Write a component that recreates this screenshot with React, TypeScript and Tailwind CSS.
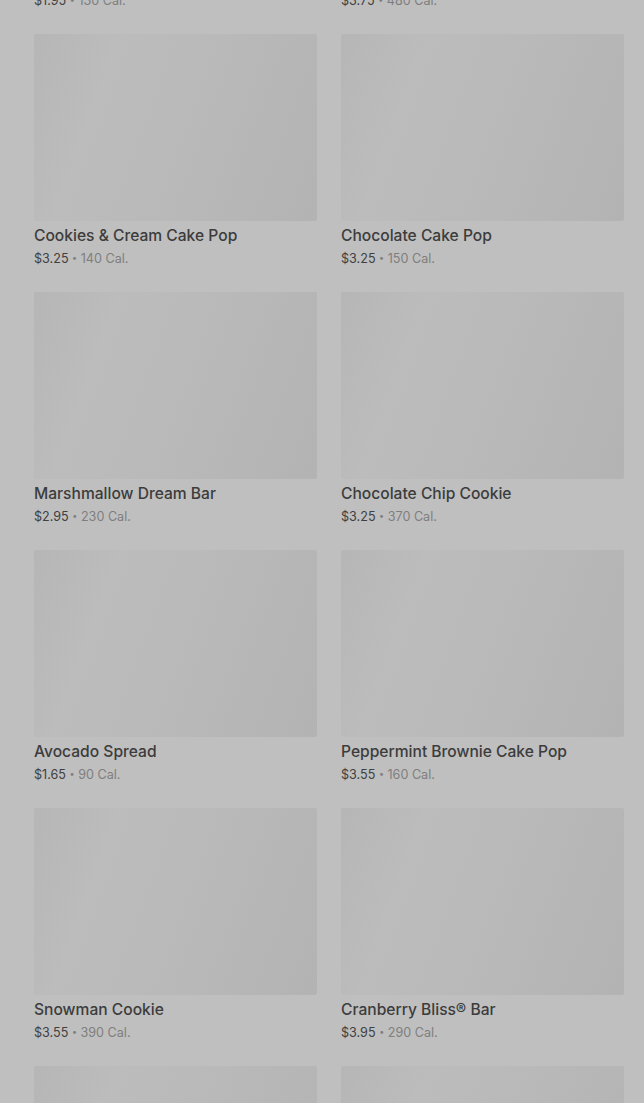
type Item = {
  name: string;
  price: string;
  cal: string;
};

const items: Item[] = [
  { name: "Cake Pop", price: "$1.95", cal: "130 Cal." },
  { name: "Bar", price: "$3.75", cal: "480 Cal." },
  { name: "Cookies & Cream Cake Pop", price: "$3.25", cal: "140 Cal." },
  { name: "Chocolate Cake Pop", price: "$3.25", cal: "150 Cal." },
  { name: "Marshmallow Dream Bar", price: "$2.95", cal: "230 Cal." },
  { name: "Chocolate Chip Cookie", price: "$3.25", cal: "370 Cal." },
  { name: "Avocado Spread", price: "$1.65", cal: "90 Cal." },
  { name: "Peppermint Brownie Cake Pop", price: "$3.55", cal: "160 Cal." },
  { name: "Snowman Cookie", price: "$3.55", cal: "390 Cal." },
  { name: "Cranberry Bliss® Bar", price: "$3.95", cal: "290 Cal." },
  { name: "Petite Vanilla Bean Scone", price: "$1.95", cal: "120 Cal." },
  { name: "Lemon Loaf", price: "$3.45", cal: "470 Cal." },
];

function ProductCard({ item }: { item: Item }) {
  return (
    <div className="flex flex-col">
      <div className="h-[187px] w-full rounded-[2px] bg-[linear-gradient(110deg,#b6b6b6_0%,#bcbcbc_25%,#b9b9b9_55%,#b3b3b3_100%)]" />
      <p className="mt-[5px] text-[15.6px] leading-[20px] font-medium text-[#3c3c3c]">{item.name}</p>
      <p className="mt-[4px] h-[17px] text-[12.6px] leading-[17px] text-[#404040]">
        {item.price}
        <span className="text-[#7e7e7e]">
          {" "}
          <span className="align-[2px] text-[9px] leading-none">•</span> {item.cal}
        </span>
      </p>
    </div>
  );
}

export default function App() {
  return (
    <main
      className="h-[1103px] overflow-hidden bg-[#bfbfbf] pl-[34px] pr-[20px]"
      style={{ fontFamily: "Inter, 'Noto Sans', sans-serif" }}
    >
      <div className="-mt-[224px] grid grid-cols-2 gap-x-[24px] gap-y-[25px]">
        {items.map((item) => (
          <ProductCard key={item.name} item={item} />
        ))}
      </div>
    </main>
  );
}
